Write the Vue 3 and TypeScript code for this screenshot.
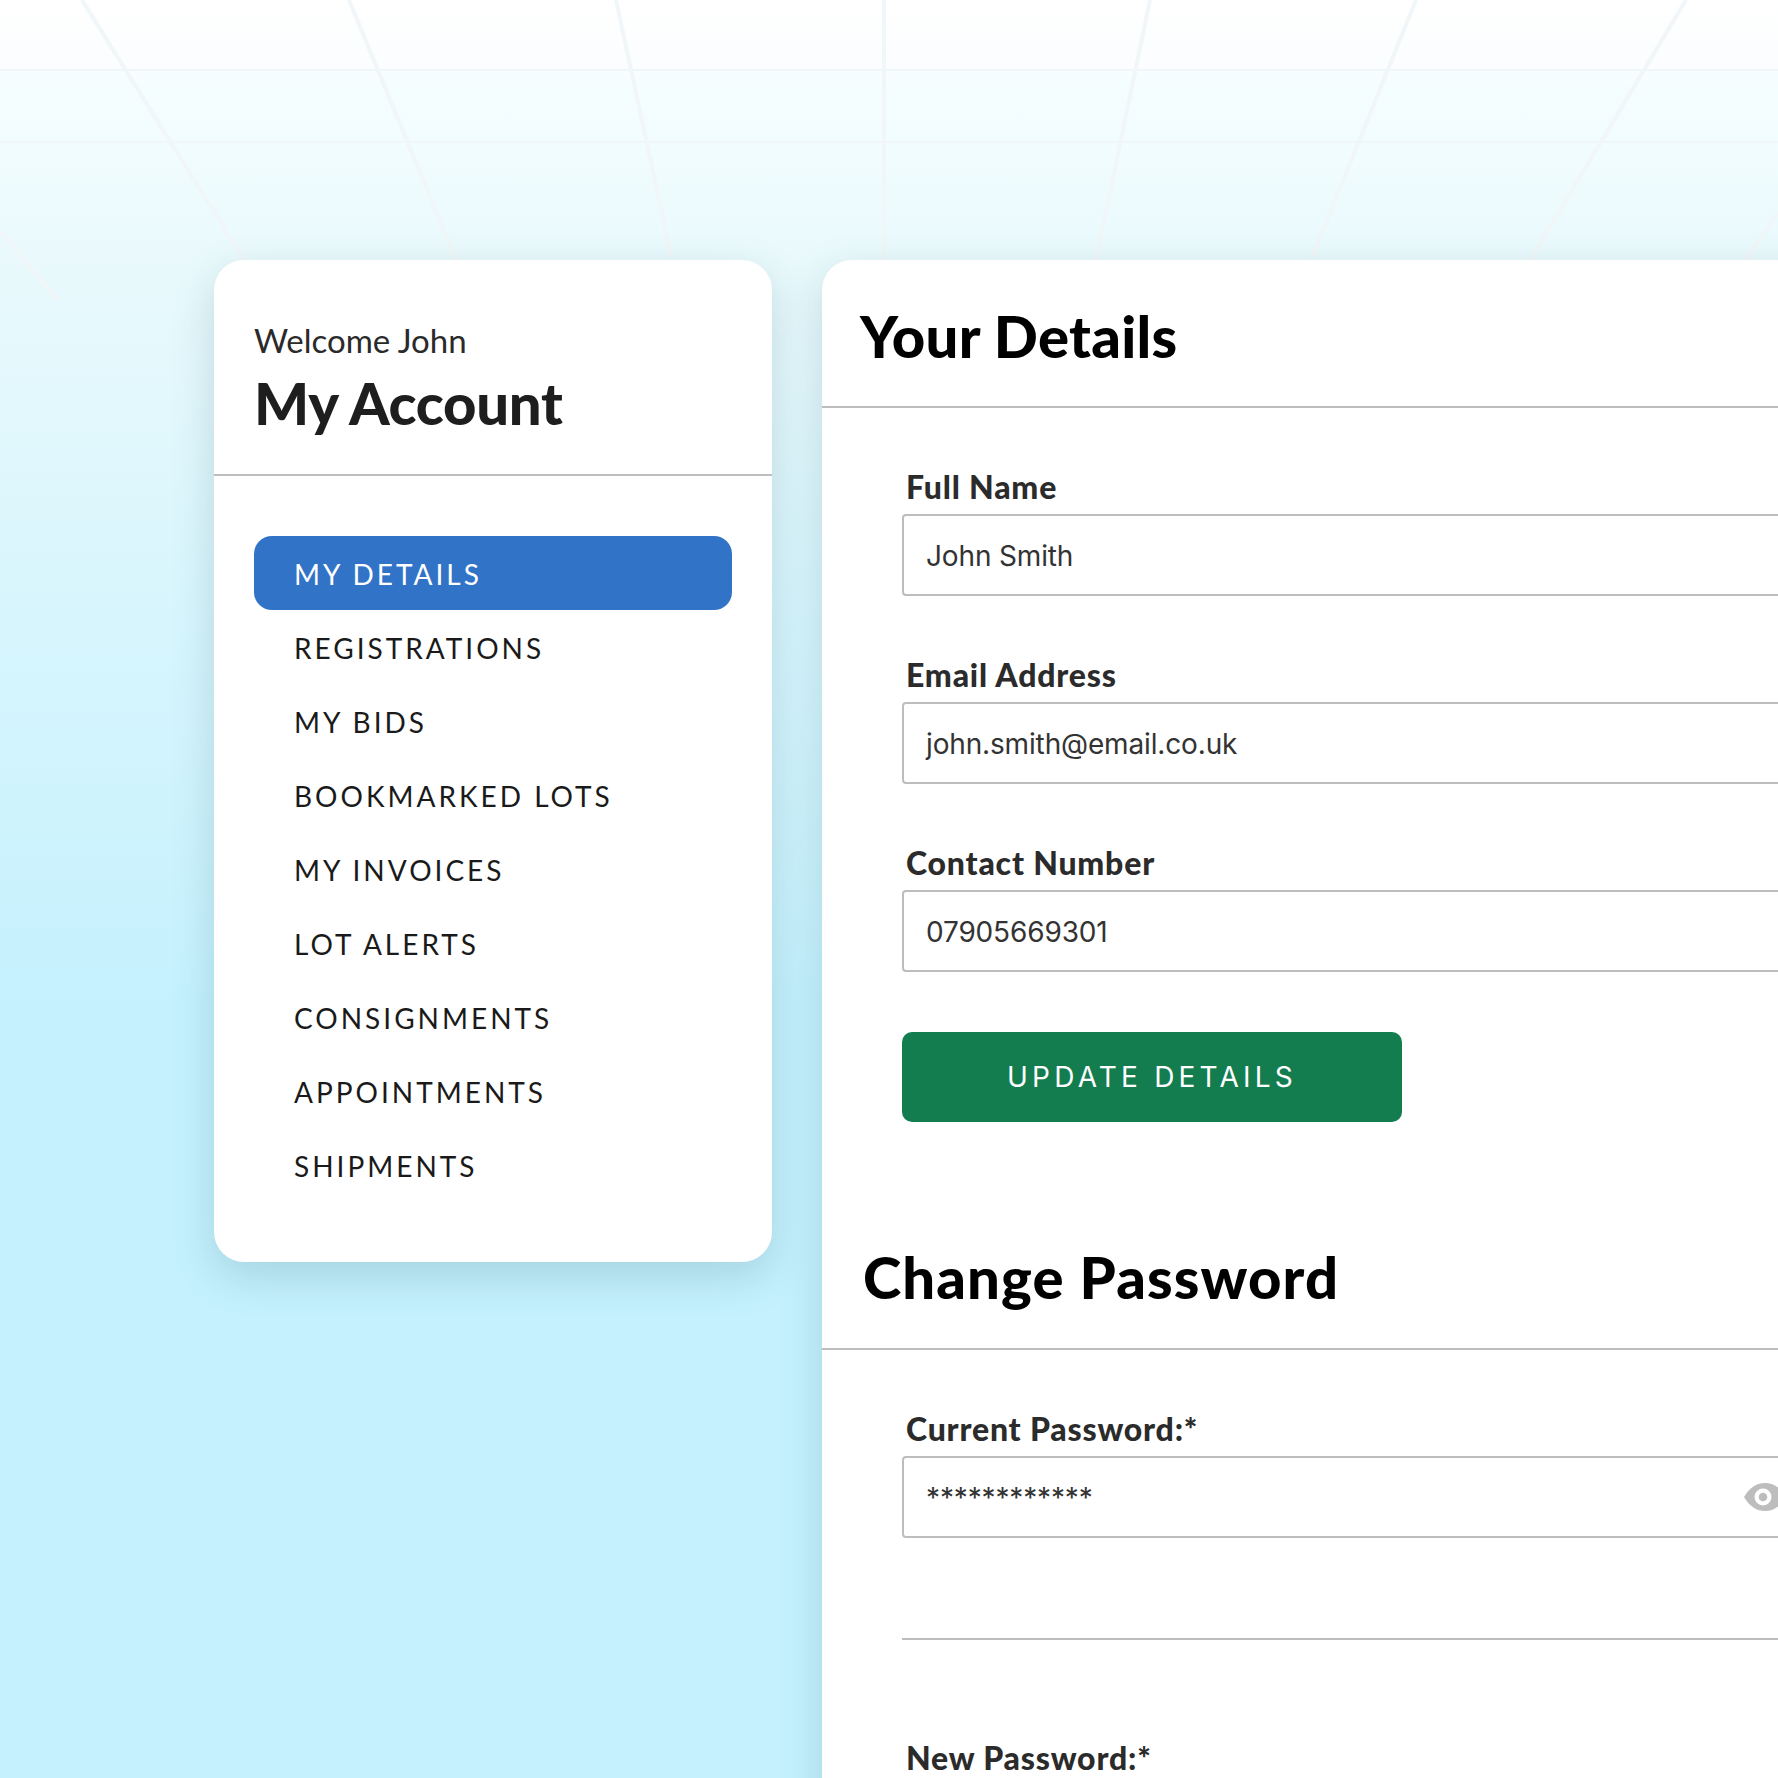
<script setup lang="ts">
type Field = { label: string; value: string }

const navItems = [
  'My Details',
  'Registrations',
  'My Bids',
  'Bookmarked Lots',
  'My Invoices',
  'Lot Alerts',
  'Consignments',
  'Appointments',
  'Shipments'
]

const detailFields: Field[] = [
  { label: 'Full Name', value: 'John Smith' },
  { label: 'Email Address', value: 'john.smith@email.co.uk' },
  { label: 'Contact Number', value: '07905669301' }
]

// faint perspective grid behind the cards
const gridLines = [
  [82, 0, 244, 260],
  [349, 0, 456, 260],
  [616, 0, 672, 260],
  [884, 0, 884, 260],
  [1150, 0, 1096, 260],
  [1416, 0, 1311, 260],
  [1686, 0, 1530, 260],
  [1778, 213, 1745, 260],
  [0, 230, 57, 300]
]
const gridRows = [70, 142]
</script>

<template>
  <div class="page">
    <svg class="grid" width="1778" height="300" viewBox="0 0 1778 300" aria-hidden="true">
      <line
        v-for="(l, i) in gridLines"
        :key="i"
        :x1="l[0]"
        :y1="l[1]"
        :x2="l[2]"
        :y2="l[3]"
      />
      <line v-for="y in gridRows" :key="y" class="row" x1="0" :y1="y" x2="1778" :y2="y" />
    </svg>

    <aside class="sidebar">
      <header class="sidebar-head">
        <p class="welcome">Welcome John</p>
        <h2 class="account">My Account</h2>
      </header>
      <nav class="nav">
        <a
          v-for="(item, i) in navItems"
          :key="item"
          class="nav-item"
          :class="{ active: i === 0 }"
        >{{ item }}</a>
      </nav>
    </aside>

    <main class="content">
      <section class="block">
        <h1 class="block-title">Your Details</h1>
        <div class="fields">
          <div v-for="field in detailFields" :key="field.label" class="field">
            <label class="field-label">{{ field.label }}</label>
            <div class="input">{{ field.value }}</div>
          </div>
          <button class="submit" type="button">Update Details</button>
        </div>
      </section>

      <section class="block">
        <h1 class="block-title second">Change Password</h1>
        <div class="fields password">
          <div class="field">
            <label class="field-label">Current Password:*</label>
            <div class="input">
              ************
              <svg class="eye" width="44" height="30" viewBox="0 0 44 30" aria-hidden="true">
                <path d="M1 15C7 5 14 1 22 1s15 4 21 14c-6 10-13 14-21 14S7 25 1 15z" fill="#bdbdbd" />
                <circle cx="20" cy="15" r="8.5" fill="#fff" />
                <circle cx="20" cy="15" r="4.3" fill="#bdbdbd" />
              </svg>
            </div>
          </div>
          <hr class="rule" />
          <div class="field">
            <label class="field-label">New Password:*</label>
          </div>
        </div>
      </section>
    </main>
  </div>
</template>

<style>
html,
body {
  margin: 0;
  background: #c5f1fe;
}
</style>

<style scoped>
.page {
  position: relative;
  display: flex;
  align-items: flex-start;
  gap: 50px;
  box-sizing: border-box;
  width: 1778px;
  height: 1778px;
  padding: 260px 0 0 214px;
  overflow: hidden;
  font-family: Lato, 'Open Sans', sans-serif;
  color: #222;
  background: linear-gradient(180deg, #ffffff 0, #fbfdfe 68px, #f6feff 72px, #e8f9fc 280px, #c5f1fe 1000px);
}

.grid {
  position: absolute;
  top: 0;
  left: 0;
}

.grid line {
  stroke: #f1f6f8;
  stroke-width: 4;
}

.grid .row {
  stroke-width: 2;
}

.sidebar,
.content {
  position: relative;
  flex-shrink: 0;
  background: #fff;
  box-shadow: 0 14px 40px rgba(60, 110, 120, 0.22);
}

.sidebar {
  box-sizing: border-box;
  width: 558px;
  height: 1002px;
  border-radius: 30px;
}

.sidebar-head {
  box-sizing: border-box;
  height: 216px;
  padding: 60px 40px 0;
  border-bottom: 2px solid #bdbdbd;
}

.welcome {
  margin: 0;
  font-size: 33px;
  line-height: 40px;
  font-weight: 400;
  color: #2a2a2a;
}

.account {
  margin: 8px 0 0;
  font-size: 58px;
  line-height: 70px;
  font-weight: 900;
  letter-spacing: -0.3px;
  color: #1e1e1e;
}

.nav {
  display: flex;
  flex-direction: column;
  padding: 60px 40px 0;
}

.nav-item {
  box-sizing: border-box;
  height: 74px;
  padding-left: 40px;
  border-radius: 18px;
  font-size: 28px;
  line-height: 76px;
  letter-spacing: 3px;
  text-transform: uppercase;
  color: #1a1a1a;
}

.nav-item.active {
  background: #3173c7;
  color: #fff;
}

.content {
  width: 1200px;
  height: 1600px;
  border-radius: 30px 0 0 0;
}

.block-title {
  box-sizing: border-box;
  height: 148px;
  margin: 0;
  padding: 41px 0 0 38px;
  border-bottom: 2px solid #bdbdbd;
  font-size: 58px;
  line-height: 70px;
  font-weight: 900;
  letter-spacing: 0.3px;
  color: #000;
}

.block-title.second {
  height: 147px;
  padding: 39px 0 0 41px;
  letter-spacing: 1.1px;
}

.fields {
  display: flex;
  flex-direction: column;
  align-items: flex-start;
  gap: 57px;
  padding: 57px 0 81px 80px;
}

.fields.password {
  gap: 0;
  padding-bottom: 0;
}

.field {
  width: 100%;
}

.field-label {
  display: block;
  height: 49px;
  padding-left: 4px;
  font-size: 32px;
  line-height: 43px;
  font-weight: 900;
  letter-spacing: 0.8px;
  color: #2b2b2b;
}

.input {
  position: relative;
  box-sizing: border-box;
  height: 82px;
  padding-left: 22px;
  border: 2px solid #bdbdbd;
  border-radius: 4px;
  font-family: Inter, sans-serif;
  font-size: 28px;
  letter-spacing: -0.15px;
  line-height: 80px;
  color: #333;
}

.eye {
  position: absolute;
  top: 24px;
  left: 839px;
}

.submit {
  width: 500px;
  height: 90px;
  margin-top: 3px;
  border: 0;
  border-radius: 10px;
  background: #137d50;
  font-family: Inter, sans-serif;
  font-size: 28px;
  letter-spacing: 4.2px;
  text-transform: uppercase;
  color: #fff;
}

.rule {
  width: 100%;
  height: 2px;
  margin: 100px 0 96px;
  border: 0;
  background: #bdbdbd;
}
</style>
